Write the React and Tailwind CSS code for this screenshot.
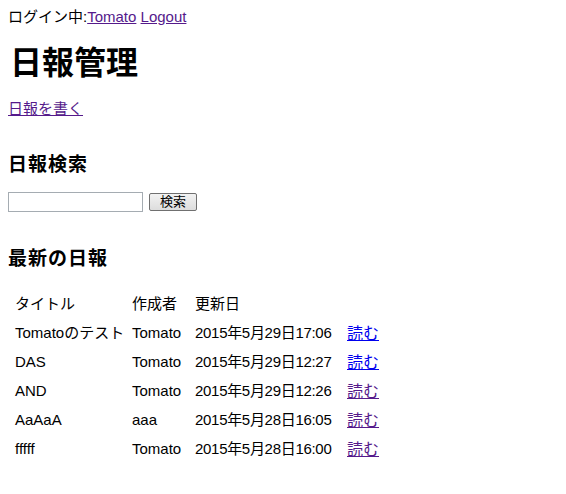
export default function App() {
  const reports = [
    { title: "Tomatoのテスト", author: "Tomato", date: "2015年5月29日17:06", visited: false },
    { title: "DAS", author: "Tomato", date: "2015年5月29日12:27", visited: false },
    { title: "AND", author: "Tomato", date: "2015年5月29日12:26", visited: true },
    { title: "AaAaA", author: "aaa", date: "2015年5月28日16:05", visited: true },
    { title: "fffff", author: "Tomato", date: "2015年5月28日16:00", visited: true },
  ];

  return (
    <div
      className="min-h-[494px] bg-white p-2 text-black"
      style={{ fontFamily: '"Liberation Sans", "Noto Sans CJK JP", sans-serif' }}
    >
      <div className="text-[15px] leading-[18px]">
        ログイン中:<a href="#" className="text-[#551a8b] underline">Tomato</a>{" "}
        <a href="#" className="text-[#551a8b] underline">Logout</a>
      </div>

      <h1 className="mt-[19px] pl-[2px] text-[32px] font-bold leading-[37px]">日報管理</h1>

      <div className="mt-[18px] text-[15px] leading-[18px]">
        <a href="#" className="text-[#551a8b] underline">日報を書く</a>
      </div>

      <h3 className="mt-[36px] text-[19px] font-bold leading-[22px] tracking-[1px]">日報検索</h3>
      <div className="mt-[16px] flex items-center gap-[6px]">
        <input
          type="text"
          className="h-[20px] w-[135px] border border-[#a5acb2] bg-white px-1 text-[13px]"
        />
        <button className="h-[18px] w-[48px] rounded-[2px] border border-[#707070] bg-gradient-to-b from-[#f2f2f2] to-[#dddddd] text-[13px] leading-[14px]">
          検索
        </button>
      </div>

      <h3 className="mt-[36px] text-[19px] font-bold leading-[22px] tracking-[1px]">最新の日報</h3>

      <table className="mt-[20px] ml-[7px] border-collapse text-[15px]">
        <thead>
          <tr className="h-[29px]">
            <th className="w-[117px] p-0 text-left font-normal">タイトル</th>
            <th className="w-[63px] p-0 text-left font-normal">作成者</th>
            <th className="w-[152px] p-0 text-left font-normal">更新日</th>
            <th className="p-0" />
          </tr>
        </thead>
        <tbody>
          {reports.map((r) => (
            <tr key={r.date} className="h-[29px]">
              <td className="p-0 whitespace-nowrap">{r.title}</td>
              <td className="p-0 whitespace-nowrap">{r.author}</td>
              <td className="p-0 whitespace-nowrap tracking-[-0.3px]">{r.date}</td>
              <td className="p-0">
                <a
                  href="#"
                  className={`text-[16px] underline ${r.visited ? "text-[#551a8b]" : "text-[#0000ee]"}`}
                >
                  読む
                </a>
              </td>
            </tr>
          ))}
        </tbody>
      </table>
    </div>
  );
}
